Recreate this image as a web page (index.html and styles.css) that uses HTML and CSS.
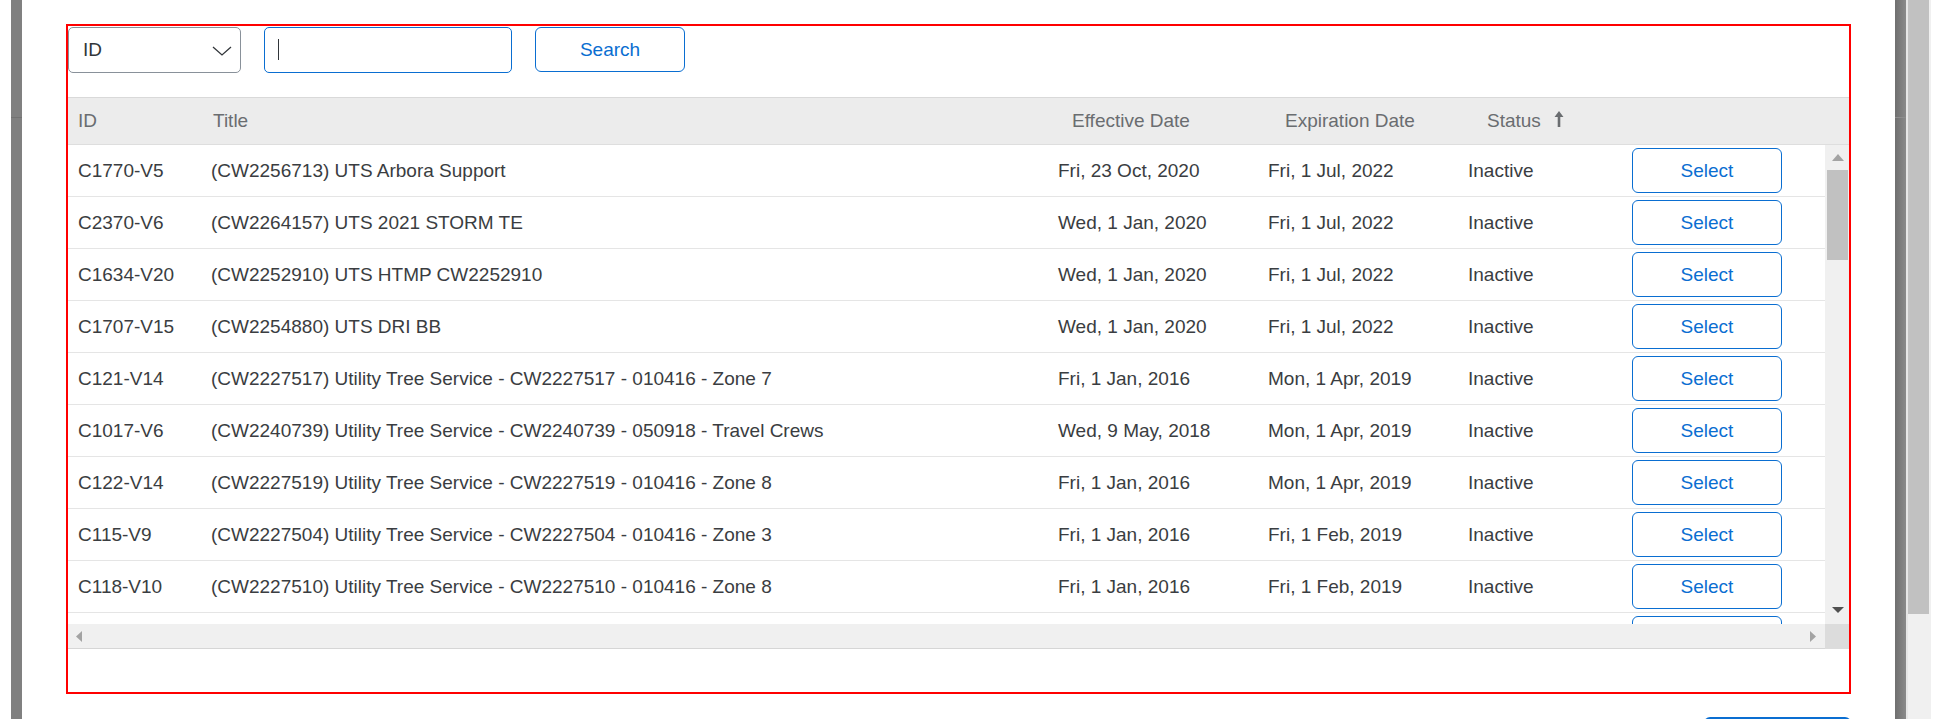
FILE: index.html
```html
<!DOCTYPE html>
<html>
<head>
<meta charset="utf-8">
<link rel="stylesheet" href="styles.css">
</head>
<body>
<div class="screen">
  <div class="edge-white"></div>
  <div class="edge-left"><div class="edge-line"></div></div>
  <div class="dialog">
    <div class="frame">
      <div class="toolbar">
        <div class="select-box">
          <span>ID</span>
          <svg class="chev" width="20" height="10" viewBox="0 0 20 10"><polyline points="1,1 10,9 19,1" fill="none" stroke="#32363a" stroke-width="1.3"/></svg>
        </div>
        <div class="text-input"><span class="caret"></span></div>
        <button class="btn-outline search-btn">Search</button>
      </div>

      <div class="thead">
        <div class="th">ID</div>
        <div class="th">Title</div>
        <div class="th">Effective Date</div>
        <div class="th">Expiration Date</div>
        <div class="th">Status
          <svg class="sort" width="10" height="16" viewBox="0 0 10 16"><path d="M5 0 L9.5 6 H6.3 V16 H3.7 V6 H0.5 Z" fill="#6a6d70"/></svg>
        </div>
        <div class="th"></div>
      </div>

      <div class="tbody-wrap">
        <div class="tbody">
          <div class="tr"><div class="td">C1770-V5</div><div class="td">(CW2256713) UTS Arbora Support</div><div class="td">Fri, 23 Oct, 2020</div><div class="td">Fri, 1 Jul, 2022</div><div class="td">Inactive</div><div class="td"><button class="btn-outline sel-btn">Select</button></div></div>
          <div class="tr"><div class="td">C2370-V6</div><div class="td">(CW2264157) UTS 2021 STORM TE</div><div class="td">Wed, 1 Jan, 2020</div><div class="td">Fri, 1 Jul, 2022</div><div class="td">Inactive</div><div class="td"><button class="btn-outline sel-btn">Select</button></div></div>
          <div class="tr"><div class="td">C1634-V20</div><div class="td">(CW2252910) UTS HTMP CW2252910</div><div class="td">Wed, 1 Jan, 2020</div><div class="td">Fri, 1 Jul, 2022</div><div class="td">Inactive</div><div class="td"><button class="btn-outline sel-btn">Select</button></div></div>
          <div class="tr"><div class="td">C1707-V15</div><div class="td">(CW2254880) UTS DRI BB</div><div class="td">Wed, 1 Jan, 2020</div><div class="td">Fri, 1 Jul, 2022</div><div class="td">Inactive</div><div class="td"><button class="btn-outline sel-btn">Select</button></div></div>
          <div class="tr"><div class="td">C121-V14</div><div class="td">(CW2227517) Utility Tree Service - CW2227517 - 010416 - Zone 7</div><div class="td">Fri, 1 Jan, 2016</div><div class="td">Mon, 1 Apr, 2019</div><div class="td">Inactive</div><div class="td"><button class="btn-outline sel-btn">Select</button></div></div>
          <div class="tr"><div class="td">C1017-V6</div><div class="td">(CW2240739) Utility Tree Service - CW2240739 - 050918 - Travel Crews</div><div class="td">Wed, 9 May, 2018</div><div class="td">Mon, 1 Apr, 2019</div><div class="td">Inactive</div><div class="td"><button class="btn-outline sel-btn">Select</button></div></div>
          <div class="tr"><div class="td">C122-V14</div><div class="td">(CW2227519) Utility Tree Service - CW2227519 - 010416 - Zone 8</div><div class="td">Fri, 1 Jan, 2016</div><div class="td">Mon, 1 Apr, 2019</div><div class="td">Inactive</div><div class="td"><button class="btn-outline sel-btn">Select</button></div></div>
          <div class="tr"><div class="td">C115-V9</div><div class="td">(CW2227504) Utility Tree Service - CW2227504 - 010416 - Zone 3</div><div class="td">Fri, 1 Jan, 2016</div><div class="td">Fri, 1 Feb, 2019</div><div class="td">Inactive</div><div class="td"><button class="btn-outline sel-btn">Select</button></div></div>
          <div class="tr"><div class="td">C118-V10</div><div class="td">(CW2227510) Utility Tree Service - CW2227510 - 010416 - Zone 8</div><div class="td">Fri, 1 Jan, 2016</div><div class="td">Fri, 1 Feb, 2019</div><div class="td">Inactive</div><div class="td"><button class="btn-outline sel-btn">Select</button></div></div>
          <div class="tr"><div class="td"></div><div class="td"></div><div class="td"></div><div class="td"></div><div class="td"></div><div class="td"><button class="btn-outline sel-btn" aria-label="Select"></button></div></div>
        </div>
        <div class="vscroll">
          <svg class="arr-up" width="12" height="7" viewBox="0 0 12 7"><path d="M6 0 L12 7 H0 Z" fill="#a3a3a3"/></svg>
          <div class="vthumb"></div>
          <div class="vspacer"></div>
          <svg class="arr-down" width="12" height="6" viewBox="0 0 12 6"><path d="M0 0 H12 L6 6 Z" fill="#505050"/></svg>
        </div>
      </div>

      <div class="hscroll">
        <div class="htrack">
          <svg width="6" height="11" viewBox="0 0 6 11"><path d="M6 0 V11 L0 5.5 Z" fill="#a3a3a3"/></svg>
          <svg width="6" height="11" viewBox="0 0 6 11"><path d="M0 0 V11 L6 5.5 Z" fill="#a3a3a3"/></svg>
        </div>
        <div class="hcorner"></div>
      </div>
    </div>
    <div class="footer">
      <button class="btn-primary" aria-label="OK"></button>
    </div>
  </div>
  <div class="edge-right"><div class="edge-line light"></div></div>
  <div class="page-scroll"><div class="page-thumb"></div></div>
  <div class="edge-white-r"></div>
</div>
</body>
</html>
```

FILE: styles.css
```css
* { box-sizing: border-box; }
html, body { margin: 0; padding: 0; }
body {
  width: 1942px;
  height: 719px;
  overflow: hidden;
  background: #ffffff;
  font-family: "Liberation Sans", Arial, sans-serif;
  font-size: 19px;
  color: #32363a;
}
.screen {
  display: flex;
  height: 719px;
  overflow: hidden;
}
.edge-white { width: 11px; background: #fff; }
.edge-left {
  width: 11px;
  background: #808080;
  padding-top: 117px;
}
.edge-line { height: 1px; background: #727272; }
.edge-line.light { background: #8e8e8e; }
.edge-right {
  width: 11px;
  background: linear-gradient(to right, #6f6f6f, #8a8a8a);
  padding-top: 117px;
}
.page-scroll {
  width: 25px;
  background: #f0f0f0;
  border-left: 2px solid #e6e6e6;
}
.page-thumb {
  width: 21px;
  height: 614px;
  background: #c1c1c1;
}
.edge-white-r { flex: 1; background: #fff; }

.dialog {
  width: 1873px;
  height: 719px;
  overflow: hidden;
  background: #fff;
  padding: 24px 44px 0 44px;
}
.frame {
  border: 2px solid #ff0000;
  height: 670px;
  display: flex;
  flex-direction: column;
}
.toolbar {
  display: flex;
  gap: 23px;
  padding-top: 1px;
  height: 47px;
  margin-bottom: 24px;
  align-items: flex-start;
}
.select-box {
  width: 173px;
  height: 46px;
  border: 1px solid #89919a;
  border-radius: 5px;
  display: flex;
  align-items: center;
  justify-content: space-between;
  padding: 0 8px 0 14px;
  color: #32363a;
}
.chev { margin-top: 2px; }
.text-input {
  width: 248px;
  height: 46px;
  border: 1px solid #0a6ed1;
  border-radius: 5px;
  padding: 11px 0 0 13px;
}
.caret {
  display: block;
  width: 1px;
  height: 21px;
  background: #32363a;
}
.btn-outline {
  font-family: "Liberation Sans", Arial, sans-serif;
  font-size: 19px;
  color: #0a6ed1;
  background: #fff;
  border: 1px solid #0a6ed1;
  border-radius: 6px;
  padding: 0;
}
.search-btn { width: 150px; height: 45px; }

.thead {
  display: grid;
  grid-template-columns: 135px 859px 213px 202px 166px 206px;
  height: 48px;
  background: #ececec;
  border-top: 1px solid #d9d9d9;
  border-bottom: 1px solid #dedede;
  color: #6a6d70;
}
.th {
  display: flex;
  align-items: center;
  padding-left: 10px;
  white-space: nowrap;
}
.sort { margin-left: 13px; margin-top: -4px; }

.tbody-wrap {
  display: flex;
  height: 479px;
}
.tbody {
  flex: 1;
  overflow: hidden;
}
.tr {
  display: grid;
  grid-template-columns: 133px 847px 210px 200px 164px 203px;
  height: 52px;
  border-bottom: 1px solid #e5e5e5;
}
.td {
  display: flex;
  align-items: center;
  padding-left: 10px;
  white-space: nowrap;
  color: #3a3d41;
}
.td:last-child { align-items: flex-start; padding-top: 3px; }
.sel-btn { width: 150px; height: 45px; }

.vscroll {
  width: 24px;
  background: #f0f0f0;
  display: flex;
  flex-direction: column;
  align-items: center;
  padding-top: 9px;
}
.arr-up { display: block; margin-left: 1px; }
.vthumb {
  width: 21px;
  height: 90px;
  background: #c1c1c1;
  margin-top: 9px;
}
.vspacer { flex: 1; }
.arr-down { display: block; margin-left: 1px; margin-bottom: 11px; }

.hscroll {
  display: flex;
  height: 25px;
}
.htrack {
  flex: 1;
  background: #f0f0f0;
  border-bottom: 1px solid #d6d6d6;
  display: flex;
  justify-content: space-between;
  align-items: center;
  padding: 0 9px 0 8px;
}
.hcorner {
  width: 24px;
  background: #dcdcdc;
}
.footer {
  display: flex;
  justify-content: flex-end;
  margin-top: 23px;
}
.btn-primary {
  width: 147px;
  height: 40px;
  background: #0a6ed1;
  border: none;
  border-radius: 6px;
}
```
